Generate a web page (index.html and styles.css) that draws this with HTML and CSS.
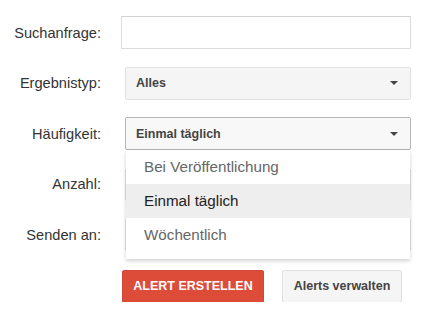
FILE: index.html
```html
<!DOCTYPE html>
<html lang="de">
<head>
  <meta charset="UTF-8">
  <title>Alert erstellen</title>
  <link rel="stylesheet" href="styles.css">
</head>
<body>

  <form class="alert-form">
    <label class="field-label">Suchanfrage:</label>
    <div class="field"><input class="text-input" type="text"></div>

    <label class="field-label">Ergebnistyp:</label>
    <div class="field">
      <div class="select-box"><span>Alles</span><span class="arrow"></span></div>
    </div>

    <label class="field-label">Häufigkeit:</label>
    <div class="field">
      <div class="select-box open"><span>Einmal täglich</span><span class="arrow"></span></div>
      <ul class="dropdown">
        <li>Bei Veröffentlichung</li>
        <li class="selected">Einmal täglich</li>
        <li>Wöchentlich</li>
      </ul>
    </div>

    <label class="field-label">Anzahl:</label>
    <div class="field">
      <div class="select-box"><span class="arrow"></span></div>
    </div>

    <label class="field-label">Senden an:</label>
    <div class="field">
      <div class="select-box"><span class="arrow"></span></div>
    </div>

    <div></div>
    <div class="actions">
      <button type="button" class="btn-create">ALERT ERSTELLEN</button>
      <button type="button" class="btn-manage">Alerts verwalten</button>
    </div>
  </form>

</body>
</html>
```

FILE: styles.css
```css
body {
  margin: 0;
  background: #ffffff;
  font-family: "Liberation Sans", Arial, sans-serif;
  color: #333;
}

.alert-form {
  display: grid;
  grid-template-columns: 101px 290px;
  grid-auto-rows: 33px;
  column-gap: 20px;
  row-gap: 17.5px;
  padding-top: 16px;
}

.field-label {
  font-size: 14.6px;
  color: #333;
  text-align: right;
  align-self: center;
  white-space: nowrap;
}

.field {
  position: relative;
}

.text-input {
  box-sizing: border-box;
  width: 100%;
  height: 33px;
  margin: 0;
  border: 1px solid #dcdcdc;
  border-top-color: #d0d0d0;
  background: #fff;
  outline: none;
}

.select-box {
  box-sizing: border-box;
  margin-left: 4px;
  height: 33px;
  padding: 0 12px 0 10px;
  display: flex;
  align-items: center;
  justify-content: space-between;
  background: #f5f5f5;
  border: 1px solid #e0e0e0;
  border-radius: 2px;
  font-size: 12.5px;
  font-weight: bold;
  color: #444;
}

.select-box .arrow:only-child {
  margin-left: auto;
}

.select-box.open {
  border-color: #b4b4b4;
  background: #f8f8f8;
}

.arrow {
  width: 0;
  height: 0;
  border-left: 4px solid transparent;
  border-right: 4px solid transparent;
  border-top: 4px solid #444;
}

.dropdown {
  position: absolute;
  top: 33px;
  left: 5px;
  right: 1px;
  z-index: 2;
  margin: 0;
  padding: 0 0 7px;
  list-style: none;
  background: #fff;
  box-shadow: 0 2px 4px rgba(0, 0, 0, 0.18);
}

.dropdown li {
  height: 34px;
  line-height: 33px;
  padding-left: 18px;
  font-size: 15.2px;
  color: #666;
}

.dropdown li.selected {
  background: #eeeeee;
  color: #222;
}

.actions {
  display: flex;
  gap: 18px;
  padding-top: 1px;
}

.btn-create,
.btn-manage {
  height: 33px;
  margin: 0;
  font-family: "Liberation Sans", Arial, sans-serif;
  font-size: 12.5px;
  font-weight: bold;
  border-radius: 2px;
  cursor: pointer;
}

.btn-create {
  margin-left: 1px;
  width: 142px;
  background: #dd4b39;
  color: #fff;
  border: 1px solid #d14836;
}

.btn-manage {
  width: 120px;
  background: #f5f5f5;
  color: #444;
  border: 1px solid #e0e0e0;
}
```
